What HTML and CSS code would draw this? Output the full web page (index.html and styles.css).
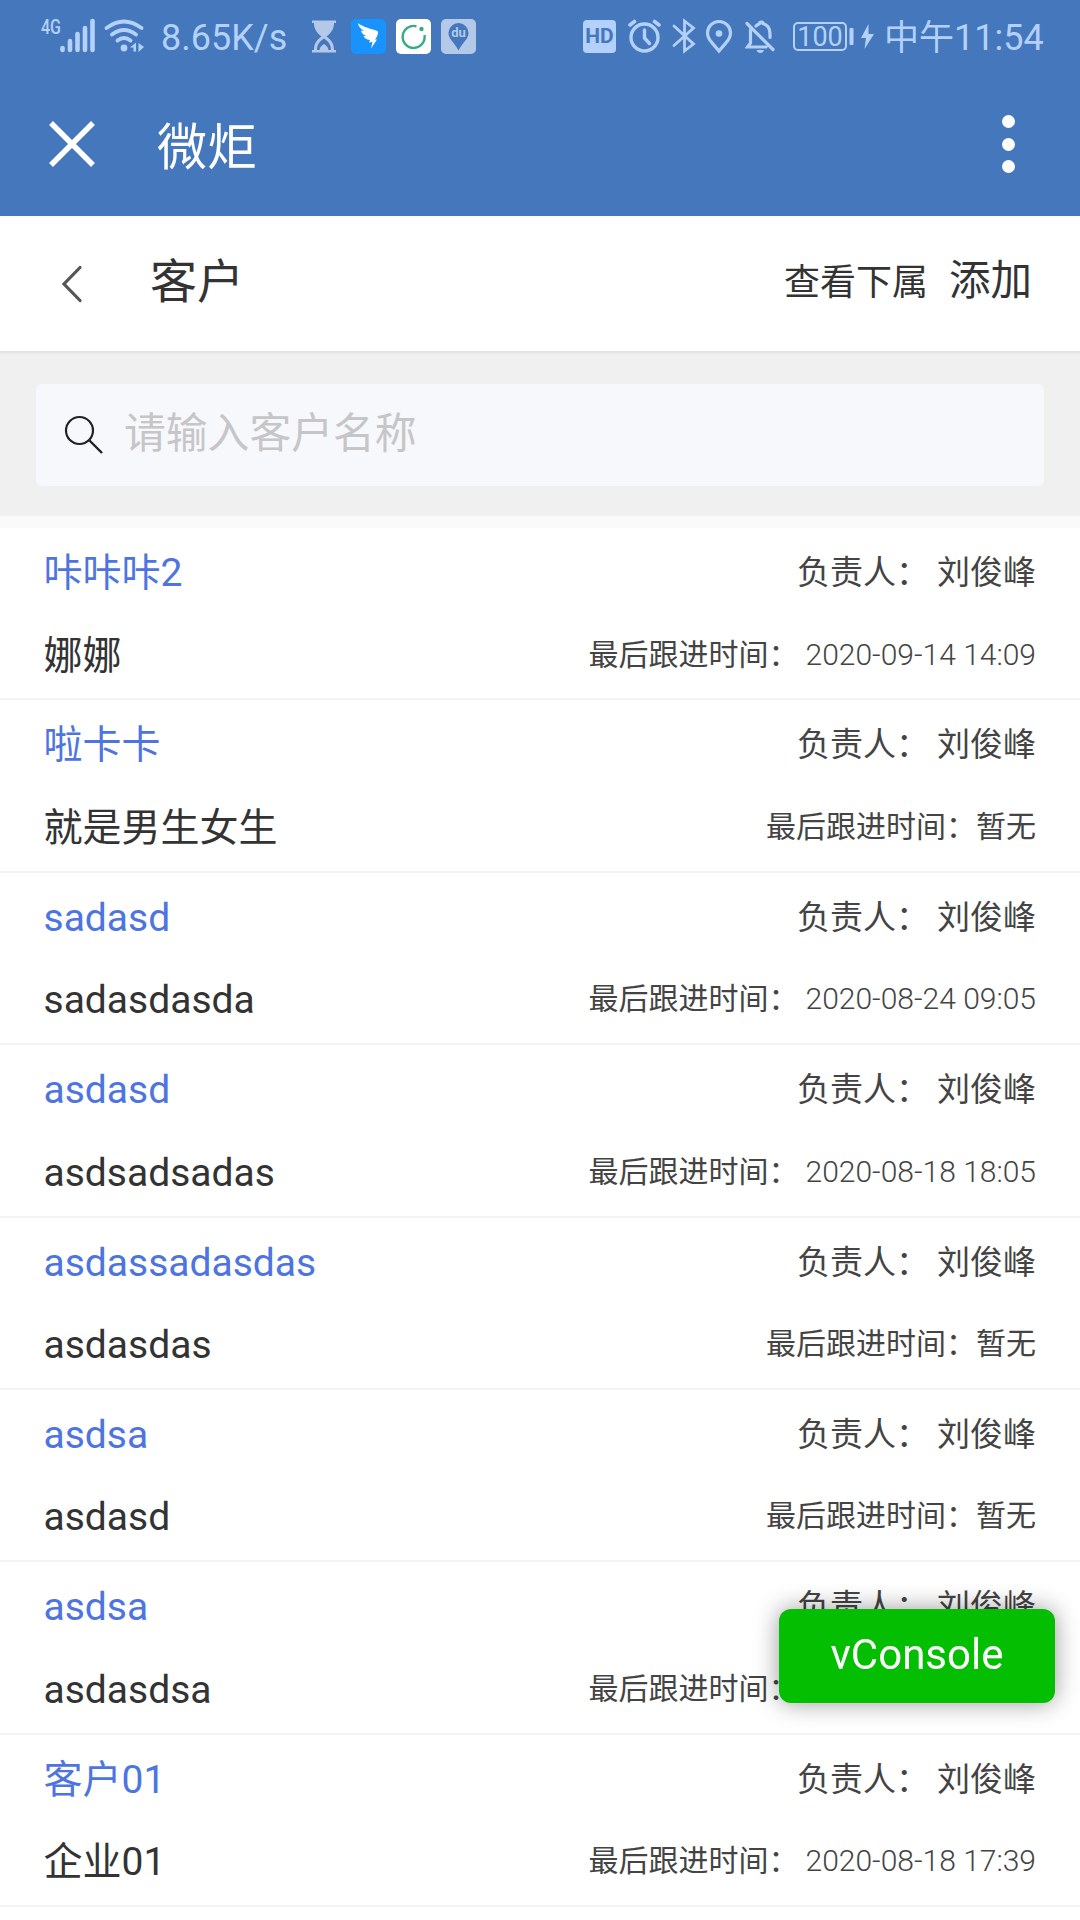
FILE: index.html
```html
<!DOCTYPE html>
<html lang="zh-CN">
<head>
  <meta charset="utf-8">
  <title>客户</title>
  <link rel="stylesheet" href="styles.css">
</head>
<body>
  <div class="app-head">
    <!-- Status bar -->
    <div class="status-bar">
      <svg class="icon-signal" width="58" height="40" viewBox="40 16 58 40">
        <text class="net-type" x="41" y="33.500" textLength="20" lengthAdjust="spacingAndGlyphs">4G</text>
        <path d="M62.500 48v2M70 41v9M77.500 34v16M85 28v22M92.500 21v29" stroke-width="4.600" stroke-linecap="round"/>
      </svg>
      <svg class="icon-wifi" width="42" height="40" viewBox="104 16 42 40">
        <path d="M106.500 28Q124 15 141.500 28M112 34.500Q124 25.500 136 34.500M117.500 40.500Q124 35.500 130.500 40.500" fill="none" stroke-width="3.800" stroke-linecap="round"/>
        <circle class="fill" cx="124" cy="48" r="3.400"/>
        <path class="fill" d="M130 47.500l6-5v9h-2.500v-4zM138.500 43l5.500 4-5.500 5z"/>
      </svg>
      <span class="speed">8.65K/s</span>
      <svg class="icon-glass" width="26" height="40" viewBox="311 16 26 40">
        <path class="soft" d="M312 20.500h24v2.500h-2c0 6-3 10-7.500 13.500 4.500 3 7.500 7 7.500 13.500h2v2.500h-24V50h2c0-6.500 3-10.500 7.500-13.500C317 33 314 29 314 23h-2z"/>
        <path class="hole" d="M317 50c0-5 2-8 7-11.500 5 3.500 7 6.500 7 11.500h-2.500c-.5-3-2-4.500-4.500-6-2.500 1.500-4 3-4.500 6z"/>
      </svg>
      <svg class="icon-app icon-first" width="35" height="40" viewBox="0 -3 35 40">
        <rect width="35" height="35" rx="5" fill="#1893fb"/>
        <path d="M7 4c5 4 12 5.500 19.500 8 1.500 2-.5 6-2.500 8.500h2l-6 9 1.500-6.500-3.500.5 1-2.500c-4-.5-5.500-2-6.500-4h2.500c-3-1.500-4.500-3-5-5.500l3 .5C9.500 9.500 7.500 7.500 7 4z" fill="#fff"/>
      </svg>
      <svg class="icon-app" width="35" height="40" viewBox="0 -3 35 40">
        <rect width="35" height="35" rx="5" fill="#fff"/>
        <path class="ring" d="M20.500 7.300A11 11 0 1 0 28.500 16"/>
        <circle cx="25.500" cy="10" r="2.200" fill="#38ab80"/>
      </svg>
      <svg class="icon-app" width="35" height="40" viewBox="0 -3 35 40">
        <rect class="soft" width="35" height="35" rx="5"/>
        <path class="hole" d="M17.500 4A10 10 0 0 0 7.500 14c0 6 5.500 9 10 17.500C22 23 27.500 20 27.500 14A10 10 0 0 0 17.500 4z"/>
        <text class="du" x="17.500" y="17.500" text-anchor="middle">du</text>
      </svg>

      <span class="hd">HD</span>
      <svg class="icon-alarm" width="33" height="40" viewBox="628 16 33 40">
        <circle cx="644.500" cy="37.500" r="13.500" fill="none" stroke-width="3.400"/>
        <path d="M644.500 30v8l5 5.500" fill="none" stroke-width="3.400" stroke-linecap="round" stroke-linejoin="round"/>
        <path d="M630 25l4.500-3.500M659 25l-4.500-3.500" stroke-width="3.600" stroke-linecap="round"/>
      </svg>
      <svg class="icon-bt" width="24" height="40" viewBox="672 16 24 40">
        <path d="M674 26l19.500 18-9 7V21l9 7L674 45.500" fill="none" stroke-width="2.800" stroke-linecap="round"/>
      </svg>
      <svg class="icon-loc" width="28" height="40" viewBox="705 16 28 40">
        <path d="M719 21.500c-6.500 0-11.500 5-11.500 11.500 0 6 4.500 9.500 11.500 18 7-8.500 11.500-12 11.500-18 0-6.500-5-11.500-11.500-11.500z" fill="none" stroke-width="3.200"/>
        <circle class="fill" cx="719" cy="33.500" r="3.300"/>
      </svg>
      <svg class="icon-bell" width="32" height="40" viewBox="745 16 32 40">
        <path d="M747 23.500l26 26M750.500 29.500V43l-3 4H766M756 26c2-1.500 3-2 3.500-2.500 0-2 3.500-2 3.500 0 5 1.500 7 5 7 10v4" fill="none" stroke-width="3.200" stroke-linecap="round"/>
        <path class="fill" d="M756.500 50h7.500c-1 4-6.500 4-7.500 0z"/>
      </svg>
      <span class="battery">100</span>
      <svg class="icon-charge" width="26" height="40" viewBox="849 16 26 40">
        <rect class="fill" x="849.500" y="28" width="4" height="17" rx="1"/>
        <path class="fill" d="M868.500 24l-7.500 14h5l-1.500 11 9.500-15h-5.500z"/>
      </svg>
      <span class="clock"><span class="noon">中午</span>11:54</span>
    </div>

    <!-- Title bar of the webview -->
    <div class="title-bar">
      <svg class="close" width="46" height="46" viewBox="0 0 46 46">
        <path d="M2 2l42 42M44 2L2 44" stroke="#fff" stroke-width="5.500"/>
      </svg>
      <span class="app-title">微炬</span>
      <div class="more"><i></i><i></i><i></i></div>
    </div>
  </div>

  <!-- Page nav -->
  <div class="nav">
    <svg class="back" width="22" height="38" viewBox="0 0 22 38">
      <path d="M19 2.500L3 19l16 16.500" fill="none" stroke="#555" stroke-width="3.200" stroke-linecap="round"/>
    </svg>
    <span class="nav-title">客户</span>
    <span class="nav-sub">查看下属</span>
    <span class="nav-add">添加</span>
  </div>

  <div class="search">
    <div class="search-box">
      <svg width="40" height="40" viewBox="0 0 40 40">
        <circle cx="15.500" cy="15.500" r="13.500" fill="none" stroke="#222" stroke-width="2.200"/>
        <path d="M25 25l13 13" stroke="#222" stroke-width="2.400"/>
      </svg>
      <input class="search-input" type="text" placeholder="请输入客户名称">
    </div>
  </div>

  <!-- Customer list -->
  <div class="list">
    <div class="item">
      <div class="line"><span class="name">咔咔咔2</span><span class="owner">负责人：<b>刘俊峰</b></span></div>
      <div class="line"><span class="company">娜娜</span><span class="follow">最后跟进时间：<b class="date">2020-09-14 14:09</b></span></div>
    </div>
    <div class="item">
      <div class="line"><span class="name">啦卡卡</span><span class="owner">负责人：<b>刘俊峰</b></span></div>
      <div class="line"><span class="company">就是男生女生</span><span class="follow">最后跟进时间：暂无</span></div>
    </div>
    <div class="item">
      <div class="line"><span class="name">sadasd</span><span class="owner">负责人：<b>刘俊峰</b></span></div>
      <div class="line"><span class="company">sadasdasda</span><span class="follow">最后跟进时间：<b class="date">2020-08-24 09:05</b></span></div>
    </div>
    <div class="item">
      <div class="line"><span class="name">asdasd</span><span class="owner">负责人：<b>刘俊峰</b></span></div>
      <div class="line"><span class="company">asdsadsadas</span><span class="follow">最后跟进时间：<b class="date">2020-08-18 18:05</b></span></div>
    </div>
    <div class="item">
      <div class="line"><span class="name">asdassadasdas</span><span class="owner">负责人：<b>刘俊峰</b></span></div>
      <div class="line"><span class="company">asdasdas</span><span class="follow">最后跟进时间：暂无</span></div>
    </div>
    <div class="item">
      <div class="line"><span class="name">asdsa</span><span class="owner">负责人：<b>刘俊峰</b></span></div>
      <div class="line"><span class="company">asdasd</span><span class="follow">最后跟进时间：暂无</span></div>
    </div>
    <div class="item">
      <div class="line"><span class="name">asdsa</span><span class="owner">负责人：<b>刘俊峰</b></span></div>
      <div class="line"><span class="company">asdasdsa</span><span class="follow">最后跟进时间：<b class="date">2020-08-18 17:39</b></span></div>
    </div>
    <div class="item">
      <div class="line"><span class="name">客户01</span><span class="owner">负责人：<b>刘俊峰</b></span></div>
      <div class="line"><span class="company">企业01</span><span class="follow">最后跟进时间：<b class="date">2020-08-18 17:39</b></span></div>
    </div>
  </div>

  <div class="vc-switch">vConsole</div>
</body>
</html>
```
FILE: styles.css
```css
* {
  box-sizing: border-box;
}
body {
  margin: 0;
  height: 1920px;
  overflow: hidden;
  background-color: #fff;
  color: #333;
  font-family: Roboto, "Noto Sans CJK SC", sans-serif;
}
svg {
  flex: none;
  display: block;
}
b {
  font-weight: normal;
}

/* Blue header */
.app-head {
  height: 216px;
  background-color: #4577bd;
}
.status-bar {
  display: flex;
  align-items: center;
  height: 72px;
  padding-left: 40px;
  color: #b3d1fa;
  font-size: 36px;
  white-space: nowrap;
}
.status-bar svg {
  stroke: #b3d1fa;
  fill: #b3d1fa;
}
.status-bar .fill,
.status-bar text {
  stroke: none;
}
.status-bar .icon-app {
  stroke: none;
  margin-left: 10px;
}
.status-bar .icon-first {
  margin-left: 14px;
}
.ring {
  fill: none;
  stroke: #38ab80;
  stroke-width: 2.4px;
}
.soft {
  fill: #b4c9e8;
  stroke: none;
}
.hole {
  fill: #4577bd;
  stroke: none;
}
.net-type {
  font-size: 20px;
  font-weight: 500;
}
.du {
  font-size: 13px;
  font-weight: bold;
  fill: #b4c9e8;
}
.icon-wifi {
  margin-left: 6px;
}
.speed {
  width: 148px;
  padding-left: 15px;
  padding-top: 4px;
  line-height: 44px;
}
.icon-glass {
  margin-left: 17px;
}
.hd {
  width: 33px;
  height: 33px;
  margin-left: 107px;
  border-radius: 4px;
  background-color: #b3d1fa;
  color: #4577bd;
  font-size: 21px;
  font-weight: bold;
  line-height: 33px;
  text-align: center;
}
.icon-alarm {
  margin-left: 12px;
}
.icon-bt {
  margin-left: 11px;
}
.icon-loc {
  margin-left: 9px;
}
.icon-bell {
  margin-left: 12px;
}
.battery {
  width: 54px;
  height: 29px;
  margin-left: 16px;
  border: 2px solid #b3d1fa;
  border-radius: 5px;
  font-size: 27px;
  line-height: 27px;
  text-align: center;
}
.icon-charge {
  margin-left: 2px;
}
.clock {
  margin-left: 9px;
  padding-top: 4px;
  line-height: 44px;
}
.noon {
  font-size: 35px;
}

.title-bar {
  display: flex;
  align-items: center;
  height: 144px;
  padding: 0 65px 0 49px;
}
.app-title {
  flex: 1;
  margin-left: 62px;
  padding-top: 7px;
  color: #fff;
  font-size: 50px;
  line-height: 60px;
}
.more {
  display: flex;
  flex-direction: column;
  gap: 9.5px;
}
.more i {
  width: 13px;
  height: 13px;
  border-radius: 50%;
  background-color: #fff;
}

/* Page nav */
.nav {
  display: flex;
  align-items: center;
  height: 135px;
  padding: 0 48px 0 61px;
  line-height: 60px;
}
.nav-title {
  flex: 1;
  margin-left: 67px;
  padding-bottom: 4px;
  font-size: 47px;
}
.nav-sub {
  padding-bottom: 2px;
  font-size: 36px;
}
.nav-add {
  margin-left: 21px;
  padding-bottom: 5px;
  font-size: 41.5px;
}

.search {
  height: 165px;
  padding: 33px 36px 0;
  background: linear-gradient(#e0e0e0, #f0f0f0 4px);
}
.search-box {
  display: flex;
  align-items: center;
  height: 102px;
  padding-left: 28px;
  border-radius: 6px;
  background-color: #f7f8fb;
}
.search-input {
  flex: 1;
  margin-left: 20px;
  padding: 0 0 3px;
  border: none;
  outline: none;
  background: none;
  font-family: inherit;
  font-size: 41.8px;
}
.search-input::placeholder {
  color: #c6c6c8;
}

/* Customer list */
.list {
  border-top: 12px solid #fafafa;
}
.item {
  height: 172.4px;
  padding: 4px 44px 0 43.5px;
  border-bottom: 2px solid #f3f3f3;
}
.line {
  display: flex;
  justify-content: space-between;
  height: 82.5px;
  line-height: 83px;
  white-space: nowrap;
}
.name {
  color: #4d74e0;
  font-size: 39px;
}
.company {
  font-size: 39px;
}
.owner {
  color: #444;
  font-size: 33px;
  line-height: 82px;
}
.owner b {
  margin-left: 8px;
}
.follow {
  color: #444;
  font-size: 30px;
  line-height: 80px;
}
.date {
  margin-left: 7px;
  font-weight: 300;
}

/* Debug button floating over the list */
.vc-switch {
  position: fixed;
  right: 25px;
  bottom: 217px;
  width: 276px;
  height: 94px;
  border-radius: 12px;
  background-color: #04be02;
  box-shadow: 0 0 24px rgba(0, 0, 0, 0.4);
  color: #fff;
  font-size: 42px;
  line-height: 92px;
  text-align: center;
}
```
